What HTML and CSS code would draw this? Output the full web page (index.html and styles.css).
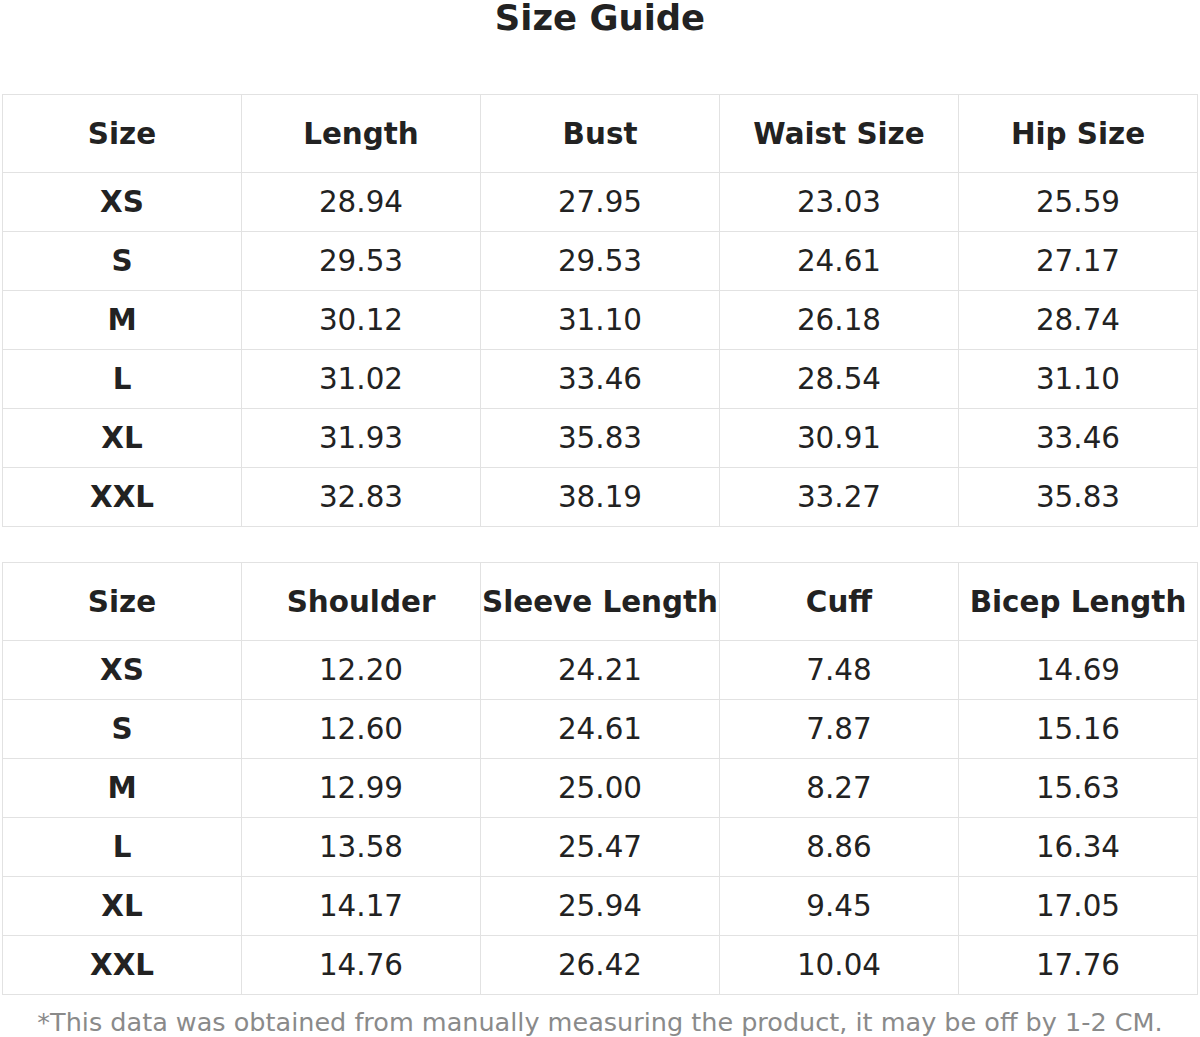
FILE: index.html
```html
<!DOCTYPE html>
<html lang="en">
<head>
<meta charset="utf-8">
<title>Size Guide</title>
<link rel="stylesheet" href="styles.css">
</head>
<body>
<main class="page">
  <h1 class="title">Size Guide</h1>
  <table class="sizes">
    <thead>
      <tr><th>Size</th><th>Length</th><th>Bust</th><th>Waist Size</th><th>Hip Size</th></tr>
    </thead>
    <tbody>
      <tr><th>XS</th><td>28.94</td><td>27.95</td><td>23.03</td><td>25.59</td></tr>
      <tr><th>S</th><td>29.53</td><td>29.53</td><td>24.61</td><td>27.17</td></tr>
      <tr><th>M</th><td>30.12</td><td>31.10</td><td>26.18</td><td>28.74</td></tr>
      <tr><th>L</th><td>31.02</td><td>33.46</td><td>28.54</td><td>31.10</td></tr>
      <tr><th>XL</th><td>31.93</td><td>35.83</td><td>30.91</td><td>33.46</td></tr>
      <tr><th>XXL</th><td>32.83</td><td>38.19</td><td>33.27</td><td>35.83</td></tr>
    </tbody>
  </table>
  <table class="sizes">
    <thead>
      <tr><th>Size</th><th>Shoulder</th><th>Sleeve Length</th><th>Cuff</th><th>Bicep Length</th></tr>
    </thead>
    <tbody>
      <tr><th>XS</th><td>12.20</td><td>24.21</td><td>7.48</td><td>14.69</td></tr>
      <tr><th>S</th><td>12.60</td><td>24.61</td><td>7.87</td><td>15.16</td></tr>
      <tr><th>M</th><td>12.99</td><td>25.00</td><td>8.27</td><td>15.63</td></tr>
      <tr><th>L</th><td>13.58</td><td>25.47</td><td>8.86</td><td>16.34</td></tr>
      <tr><th>XL</th><td>14.17</td><td>25.94</td><td>9.45</td><td>17.05</td></tr>
      <tr><th>XXL</th><td>14.76</td><td>26.42</td><td>10.04</td><td>17.76</td></tr>
    </tbody>
  </table>
  <p class="note">*This data was obtained from manually measuring the product, it may be off by 1-2 CM.</p>
</main>
</body>
</html>
```

FILE: styles.css
```css
html, body {
  margin: 0;
  padding: 0;
  background: #ffffff;
}

.page {
  padding: 0 2px 0 2px;
  font-family: "DejaVu Sans", "Liberation Sans", sans-serif;
  color: #222222;
}

.title {
  margin: 0;
  font-size: 35.4px;
  line-height: 1;
  font-weight: 700;
  text-align: center;
  color: #222222;
}

.sizes {
  width: 1196px;
  border-collapse: collapse;
  table-layout: fixed;
  margin-top: 59px;
}

.sizes + .sizes {
  margin-top: 35px;
}

.sizes th,
.sizes td {
  border: 1px solid #e2e2e2;
  text-align: center;
  padding: 0;
  font-size: 29.4px;
  white-space: nowrap;
}

.sizes thead th {
  height: 77px;
  font-weight: 700;
}

.sizes tbody th {
  height: 58px;
  font-weight: 700;
}

.sizes td {
  font-weight: 400;
  height: 58px;
}

.note {
  margin: 12px 0 0 0;
  text-align: center;
  font-size: 25.5px;
  color: #8a8a8a;
}
```
